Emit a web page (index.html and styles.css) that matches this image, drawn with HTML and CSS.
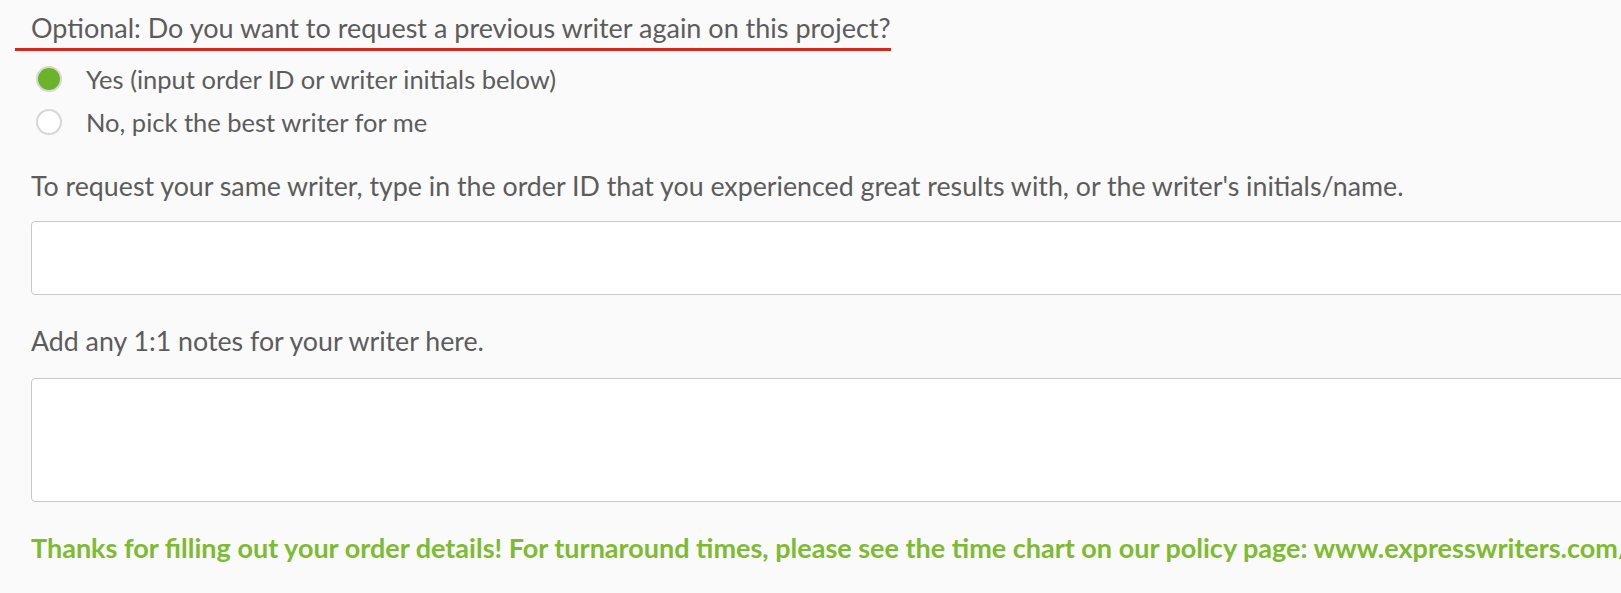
FILE: index.html
```html
<!DOCTYPE html>
<html lang="en">
<head>
    <meta charset="UTF-8">
    <meta name="viewport" content="width=device-width, initial-scale=1.0">
    <title>Order Details - Writer Request</title>
    <link rel="stylesheet" href="styles.css">
</head>
<body>
    <div class="order-form">
        <h3 class="question">Optional: Do you want to request a previous writer again on this project?</h3>

        <div class="radio-list">
            <label class="radio-row">
                <input type="radio" name="sameWriter" value="yes" checked>
                <span class="radio-dot"></span>
                Yes (input order ID or writer initials below)
            </label>
            <label class="radio-row">
                <input type="radio" name="sameWriter" value="no">
                <span class="radio-dot"></span>
                No, pick the best writer for me
            </label>
        </div>

        <div class="form-group">
            <label for="writerId">To request your same writer, type in the order ID that you experienced great results with, or the writer's initials/name.</label>
            <input type="text" id="writerId">
        </div>

        <div class="form-group notes-group">
            <label for="writerNotes">Add any 1:1 notes for your writer here.</label>
            <textarea id="writerNotes"></textarea>
        </div>

        <p class="thanks">Thanks for filling out your order details! For turnaround times, please see the time chart on our policy page: www.expresswriters.com/</p>
    </div>
</body>
</html>
```

FILE: styles.css
```css
:root {
    --text-color: #5c5c5c;
    --green: #7dbb31;
    --radio-green: #6bb42a;
    --red-line: #d8261c;
    --border-gray: #c9c9c9;
    --page-bg: #fafafa;
}

* {
    margin: 0;
    padding: 0;
    box-sizing: border-box;
    font-family: Lato, 'Open Sans', sans-serif;
}

body {
    background-color: var(--page-bg);
    color: var(--text-color);
    overflow: hidden;
}

.order-form {
    width: 1660px;
    padding: 12px 0 0 15px;
}

.question {
    display: inline-block;
    font-size: 27px;
    font-weight: 400;
    line-height: 32px;
    padding: 0 0 4px 16px;
    border-bottom: 3px solid var(--red-line);
}

.radio-list {
    padding: 6px 0 0 21px;
}

.radio-row {
    display: flex;
    align-items: center;
    gap: 24px;
    font-size: 25.5px;
    height: 43px;
    cursor: pointer;
}

.radio-row input {
    display: none;
}

.radio-dot {
    width: 26px;
    height: 26px;
    border: 2px solid #d6d6d6;
    border-radius: 50%;
    background-color: white;
}

.radio-row input:checked + .radio-dot {
    background-color: var(--radio-green);
}

.form-group {
    padding-left: 16px;
    margin-top: 27px;
}

.form-group label {
    display: block;
    font-size: 26.75px;
    line-height: 32px;
    margin-bottom: 19px;
}

.notes-group {
    margin-top: 30px;
}

.notes-group label {
    margin-bottom: 21px;
}

.form-group input,
.form-group textarea {
    display: block;
    width: 100%;
    border: 1px solid var(--border-gray);
    border-radius: 4px;
    background-color: white;
    font-size: 20px;
}

.form-group input {
    height: 74px;
}

.form-group textarea {
    height: 124px;
    resize: none;
}

.thanks {
    padding: 30px 0 0 16px;
    color: var(--green);
    font-size: 27px;
    font-weight: 700;
    line-height: 32px;
    white-space: nowrap;
}
```
